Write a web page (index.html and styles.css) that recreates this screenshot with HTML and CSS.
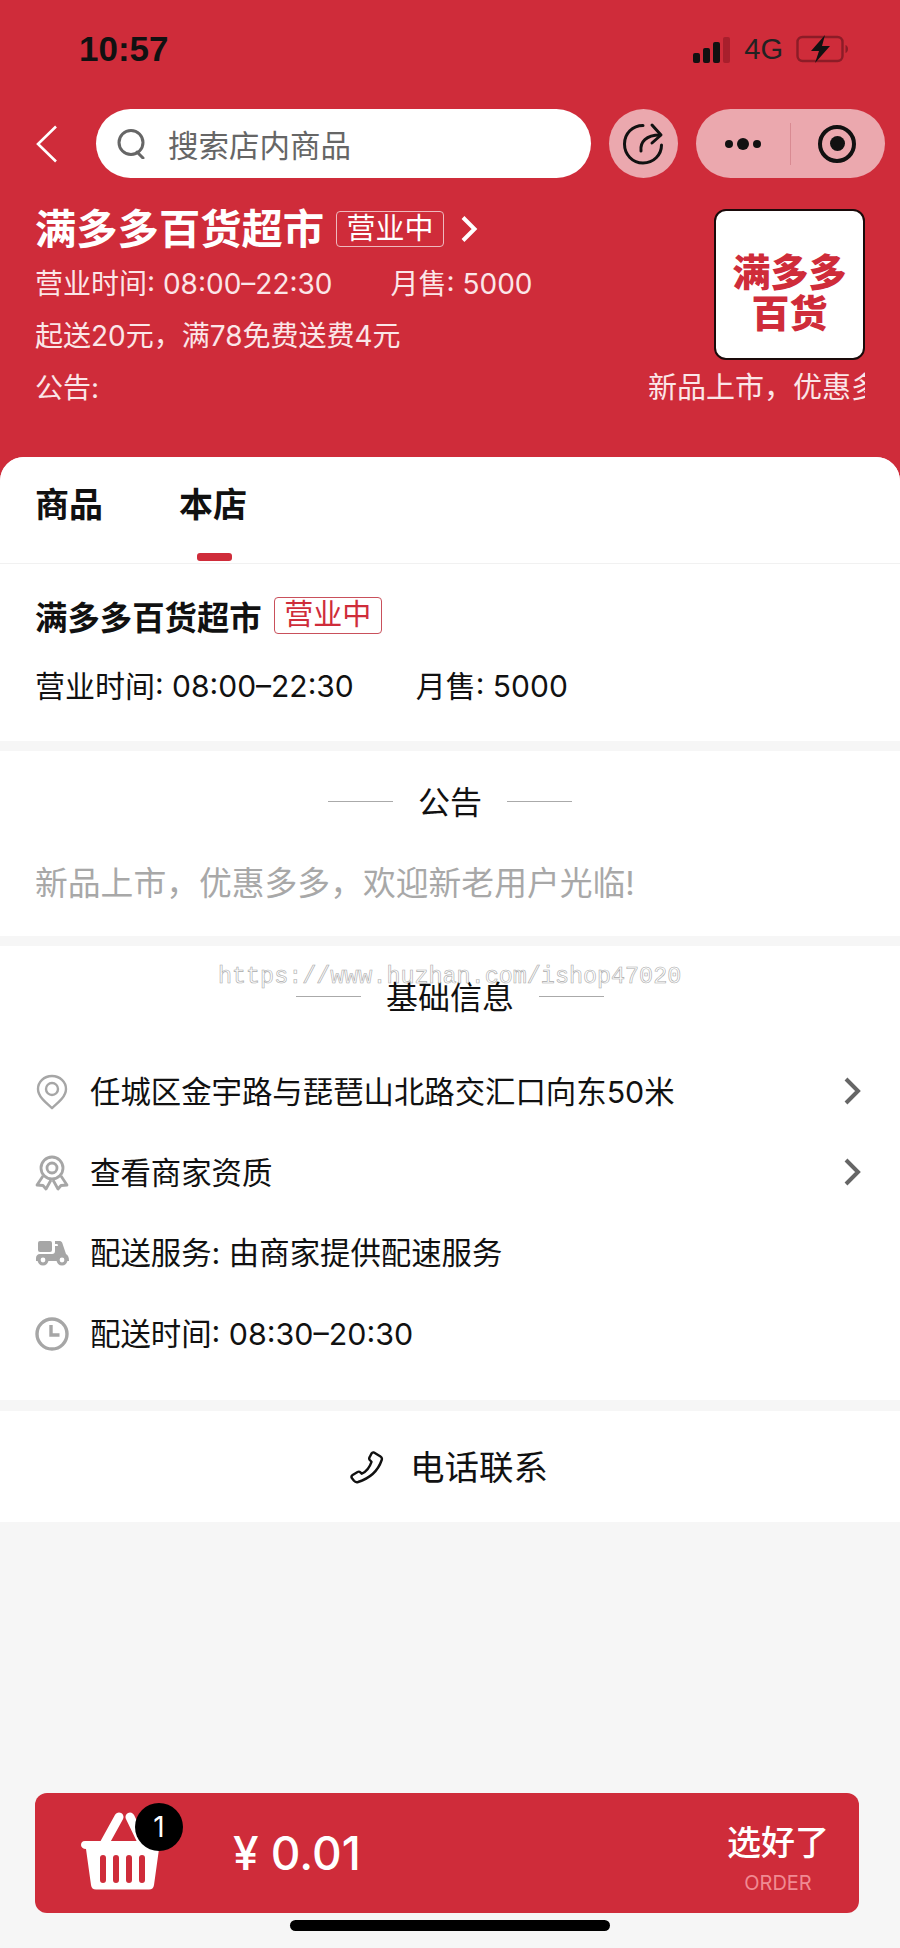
FILE: index.html
```html
<!DOCTYPE html>
<html lang="zh-CN">
<head>
  <meta charset="UTF-8" />
  <meta name="viewport" content="width=device-width, initial-scale=1.0"/>
  <title>满多多百货超市</title>
  <link rel="stylesheet" href="styles.css">
</head>
<body>
  <div class="page">
    <header class="header">
      <div class="status-bar">
        <span class="time">10:57</span>
        <div class="status-right">
          <div class="signal">
            <i class="bar bar-1"></i><i class="bar bar-2"></i><i class="bar bar-3"></i><i class="bar bar-4"></i>
          </div>
          <span class="network">4G</span>
          <svg class="battery" viewBox="0 0 52 28" width="52" height="28">
            <rect x="1.5" y="2" width="45" height="24" rx="5" fill="none" stroke="#8c1c27" stroke-width="2.4"/>
            <path d="M49.500 10v8c1.500-.5 2.500-2 2.500-4s-1-3.500-2.500-4z" fill="#8c1c27"/>
            <path d="M29 0 15 16h8l-4 12 15-17h-8z" fill="#111"/>
          </svg>
        </div>
      </div>

      <div class="nav-bar">
        <svg class="back" viewBox="0 0 22 38" width="22" height="38">
          <path d="M20 1.500 2 19l18 17.500" fill="none" stroke="#fff" stroke-width="2.600"/>
        </svg>
        <div class="search">
          <svg class="search-icon" viewBox="0 0 30 30" width="30" height="30">
            <circle cx="14" cy="13.500" r="12" fill="none" stroke="#666" stroke-width="3"/>
            <path d="M20 23l6 6" stroke="#666" stroke-width="3" stroke-linecap="round"/>
          </svg>
          <span class="search-text">搜索店内商品</span>
        </div>
        <div class="share-btn">
          <svg viewBox="0 0 44 44" width="44" height="44" fill="none" stroke="#111" stroke-width="3" stroke-linecap="round" stroke-linejoin="round">
            <path d="M21 3.500C10.500 3.500 2.500 11.500 2.500 22S10.500 41 21 41s18.500-8 18.500-18"/>
            <path d="M19 29c-1-9 5-16 19-16"/>
            <path d="M30 3l9 10-9 8"/>
          </svg>
        </div>
        <div class="capsule">
          <div class="dots"><i></i><i class="dot-big"></i><i></i></div>
          <i class="capsule-line"></i>
          <div class="target"><i></i></div>
        </div>
      </div>

      <div class="shop">
        <div class="shop-info">
          <div class="shop-title">
            <span class="shop-name">满多多百货超市</span>
            <span class="tag">营业中</span>
            <svg class="title-arrow" viewBox="0 0 18 28" width="18" height="28">
              <path d="M3 2.500 14.500 14 3 25.500" fill="none" stroke="#fff" stroke-width="4"/>
            </svg>
          </div>
          <div class="shop-line"><span class="hours">营业时间: 08:00–22:30</span><span>月售: 5000</span></div>
          <div class="shop-line">起送20元，满78免费送费4元</div>
        </div>
        <div class="logo">满多多<br>百货</div>
      </div>
      <div class="notice-line">
        <span>公告:</span>
        <div class="notice-scroll">新品上市，优惠多多，欢迎新老用户光临!</div>
      </div>
    </header>

    <main class="sheet">
      <div class="tabs">
        <div class="tab"><span>商品</span><i class="tab-bar"></i></div>
        <div class="tab active"><span>本店</span><i class="tab-bar"></i></div>
      </div>

      <section class="section store">
        <div class="store-title">
          <span class="store-name">满多多百货超市</span>
          <span class="tag tag-red">营业中</span>
        </div>
        <div class="store-line"><span class="store-hours">营业时间: 08:00–22:30</span><span>月售: 5000</span></div>
      </section>

      <section class="section announce">
        <div class="heading"><i></i><span>公告</span><i></i></div>
        <p class="announce-text">新品上市，优惠多多，欢迎新老用户光临!</p>
      </section>

      <section class="section info">
        <div class="heading"><i></i><span>基础信息</span><i></i></div>
        <div class="watermark">https://www.huzhan.com/ishop47020</div>
        <div class="info-list">
          <div class="info-row">
            <svg class="info-icon" viewBox="0 0 34 36" width="34" height="36" fill="none" stroke="#a6a6a6" stroke-width="2.400">
              <path d="M17 2C9 2 3 8 3 15c0 7.500 7.500 13.500 14 19 6.500-5.500 14-11.500 14-19C31 8 25 2 17 2z"/>
              <circle cx="17" cy="15" r="6"/>
            </svg>
            <span class="info-text">任城区金宇路与琵琶山北路交汇口向东50米</span>
            <svg class="info-arrow" viewBox="0 0 18 30" width="18" height="30"><path d="M3 3l12 12L3 27" fill="none" stroke="#666" stroke-width="4"/></svg>
          </div>
          <div class="info-row">
            <svg class="info-icon" viewBox="0 0 34 36" width="34" height="36" fill="none" stroke="#a6a6a6" stroke-width="2.800" stroke-linejoin="round">
              <circle cx="17" cy="13" r="11"/>
              <circle cx="17" cy="13" r="5"/>
              <path d="M8 21 2 30l6 .5 3 3.500 5-9"/>
              <path d="M26 21l6 9-6 .5-3 3.500-5-9"/>
            </svg>
            <span class="info-text">查看商家资质</span>
            <svg class="info-arrow" viewBox="0 0 18 30" width="18" height="30"><path d="M3 3l12 12L3 27" fill="none" stroke="#666" stroke-width="4"/></svg>
          </div>
          <div class="info-row">
            <svg class="info-icon" viewBox="0 0 34 26" width="34" height="26">
              <rect x="3" y="1" width="14" height="11" rx="2" fill="#a6a6a6"/>
              <path d="M20 1h5c1 0 2 1 2.300 2l3.700 11c2 1 3 3 3 7H1v-3c0-2 1.500-4 4-4h12c2 0 3-1 3-3V6h3l-.5-2H20z" fill="#a6a6a6"/>
              <circle cx="8" cy="20" r="5.500" fill="#a6a6a6"/>
              <circle cx="8" cy="20" r="2.400" fill="#fff"/>
              <circle cx="27" cy="20" r="5.500" fill="#a6a6a6"/>
              <circle cx="27" cy="20" r="2.400" fill="#fff"/>
            </svg>
            <span class="info-text">配送服务: 由商家提供配速服务</span>
          </div>
          <div class="info-row">
            <svg class="info-icon" viewBox="0 0 34 34" width="34" height="34" fill="none" stroke="#a6a6a6" stroke-width="3.400">
              <circle cx="17" cy="17" r="15"/>
              <path d="M16 8v10h8.500"/>
            </svg>
            <span class="info-text">配送时间: 08:30–20:30</span>
          </div>
        </div>
      </section>

      <section class="section phone">
        <svg viewBox="0 0 34 34" width="34" height="34" fill="none" stroke="#111" stroke-width="2.400" stroke-linejoin="round">
          <path d="M24 2.500l6.500 4c1.300.8 1.700 2 1.200 3.500C28 21 19 28.500 8 32c-1.800.5-3 0-4-1.200L1.800 28c-.6-1.200-.3-2.300.8-3l5-3c1-.6 2-.4 2.800.4l1.300 1.400c4-2 8-6.500 9.800-12l-1.700-1.800c-.7-.9-.8-1.800-.2-2.800l2-3.800c.6-1 1.300-1.200 2.200-.9z"/>
        </svg>
        <span>电话联系</span>
      </section>

      <div class="cart">
        <div class="basket">
          <svg viewBox="0 0 84 78" width="84" height="78">
            <path d="M23 34 39 5M50 5l14 29" stroke="#fff" stroke-width="9" stroke-linecap="round" fill="none"/>
            <path d="M5 29h74c3 0 5 2 5 4s-2 4-5 4l-5 36c-.5 3-2 4.500-5 4.500H16c-3 0-4.500-1.500-5-4.500L6 37c-3 0-5-2-5-4s1-4 4-4z" fill="#fff"/>
            <path d="M23 46v22M36 46v22M49 46v22M62 46v22" stroke="#cf2c3a" stroke-width="6" stroke-linecap="round"/>
          </svg>
          <span class="count">1</span>
        </div>
        <div class="price">¥ 0.01</div>
        <div class="order">
          <span class="order-cn">选好了</span>
          <span class="order-en">ORDER</span>
        </div>
      </div>
      <div class="home-bar"></div>
    </main>
  </div>
</body>
</html>
```

FILE: styles.css
```css
* {
  box-sizing: border-box;
}

body {
  margin: 0;
  font-family: Inter, "Noto Sans CJK SC", sans-serif;
  color: #111;
  overflow: hidden;
}

i {
  display: block;
}

.page {
  width: 900px;
  height: 1948px;
  display: flex;
  flex-direction: column;
  background: #cf2c3a;
}

/* header */
.header {
  height: 457px;
  flex-shrink: 0;
  color: #fff;
}

.status-bar {
  height: 98px;
  display: flex;
  align-items: center;
  justify-content: space-between;
  padding: 0 52px 0 79px;
  font-family: "Liberation Sans", sans-serif;
}

.time {
  font-size: 35px;
  font-weight: 700;
  color: #111;
}

.status-right {
  display: flex;
  align-items: center;
}

.signal {
  display: flex;
  align-items: flex-end;
  gap: 3px;
  height: 26px;
  margin-top: 2px;
}

.bar {
  width: 7px;
  background: #111;
  border-radius: 2px;
}

.bar-1 { height: 10px; }
.bar-2 { height: 15px; }
.bar-3 { height: 21px; }
.bar-4 { height: 26px; background: #a81f2c; }

.network {
  margin: 0 13px 0 14px;
  font-size: 29px;
  color: #222;
}

.battery {
  display: block;
}

.nav-bar {
  margin-top: 11px;
  height: 69px;
  display: flex;
  align-items: center;
  padding-left: 36px;
}

.back {
  flex-shrink: 0;
}

.search {
  width: 495px;
  height: 69px;
  margin-left: 38px;
  padding-left: 21px;
  background: #fff;
  border-radius: 35px;
  display: flex;
  align-items: center;
}

.search-text {
  margin-left: 21px;
  font-size: 30.500px;
  color: #666;
}

.share-btn {
  width: 69px;
  height: 69px;
  margin-left: 18px;
  border-radius: 50%;
  background: #eba8ae;
  display: flex;
  align-items: center;
  justify-content: center;
}

.capsule {
  width: 189px;
  height: 69px;
  margin-left: 18px;
  border-radius: 35px;
  background: #eba8ae;
  display: flex;
  align-items: center;
}

.dots {
  width: 94px;
  display: flex;
  align-items: center;
  justify-content: center;
  gap: 4px;
}

.dots i {
  width: 8px;
  height: 8px;
  border-radius: 50%;
  background: #111;
}

.dots .dot-big {
  width: 12px;
  height: 12px;
}

.capsule-line {
  width: 1px;
  height: 42px;
  background: #d98a92;
}

.target {
  width: 38px;
  height: 38px;
  margin-left: 27px;
  border: 4px solid #111;
  border-radius: 50%;
  display: flex;
  align-items: center;
  justify-content: center;
}

.target i {
  width: 15px;
  height: 15px;
  border-radius: 50%;
  background: #111;
}

.shop {
  margin-top: 31px;
  padding: 0 35px;
  display: flex;
  justify-content: space-between;
}

.shop-title {
  height: 40px;
  margin-bottom: 9px;
  display: flex;
  align-items: center;
}

.shop-name {
  font-size: 41.300px;
  font-weight: 700;
  line-height: 40px;
}

.tag {
  width: 108px;
  height: 36px;
  margin-left: 12px;
  border: 1px solid #eeb9be;
  border-radius: 4px;
  font-size: 29px;
  line-height: 33px;
  text-align: center;
}

.title-arrow {
  margin-left: 16px;
}

.shop-line {
  height: 52px;
  line-height: 52px;
  font-size: 28px;
  color: #fbe6e8;
}

.hours {
  margin-right: 58px;
}

.logo {
  width: 151px;
  height: 151px;
  padding-top: 16px;
  background: #fff;
  border: 2px solid #1a0a0a;
  border-radius: 12px;
  display: flex;
  align-items: center;
  justify-content: center;
  text-align: center;
  font-size: 38px;
  font-weight: 900;
  line-height: 41px;
  color: #cf2c3a;
}

.notice-line {
  height: 52px;
  padding: 0 35px;
  display: flex;
  justify-content: space-between;
  line-height: 52px;
  font-size: 28px;
  color: #fbe6e8;
}

.notice-scroll {
  width: 217px;
  overflow: hidden;
  white-space: nowrap;
  font-size: 29px;
}

/* sheet */
.sheet {
  flex: 1;
  display: flex;
  flex-direction: column;
  background: #f6f6f6;
  border-radius: 24px 24px 0 0;
  overflow: hidden;
}

.tabs {
  height: 107px;
  flex-shrink: 0;
  padding: 28px 0 0 35px;
  display: flex;
  gap: 76px;
  background: #fff;
  border-bottom: 1px solid #f1f1f1;
}

.tab {
  display: flex;
  flex-direction: column;
  align-items: center;
  font-size: 34px;
  font-weight: 700;
  line-height: 40px;
}

.tab-bar {
  width: 35px;
  height: 8px;
  margin: 28px 0 0 3px;
  border-radius: 3px;
}

.tab.active .tab-bar {
  background: #cf2c3a;
}

.section {
  background: #fff;
  flex-shrink: 0;
}

.store {
  padding: 31px 35px 35px;
}

.store-title {
  height: 40px;
  display: flex;
  align-items: center;
}

.store-name {
  font-size: 32.400px;
  font-weight: 700;
}

.tag-red {
  height: 37px;
  margin-left: 12px;
  border-color: #c9505b;
  color: #cf2c3a;
  line-height: 34px;
}

.store-line {
  margin-top: 31px;
  line-height: 40px;
  font-size: 30px;
}

.store-hours {
  margin-right: 62px;
}

.heading {
  height: 40px;
  display: flex;
  align-items: center;
  justify-content: center;
  gap: 25px;
  font-size: 32px;
}

.heading span {
  margin-top: -3px;
}

.heading i {
  width: 65px;
  height: 1px;
  background: #aaa;
}

.announce {
  margin-top: 10px;
  padding: 30px 35px 33px;
}

.announce-text {
  margin: 42px 0 0;
  line-height: 40px;
  font-size: 32.800px;
  color: #a8a8a8;
}

.info {
  position: relative;
  margin-top: 10px;
  padding: 30px 35px 26px;
}

.watermark {
  position: absolute;
  top: 15px;
  left: 218px;
  font-family: "Liberation Mono", monospace;
  font-size: 23.400px;
  line-height: 32px;
  color: #fff;
  -webkit-text-stroke: 0.6px #aaa;
  white-space: nowrap;
}

.info-list {
  margin-top: 36px;
}

.info-row {
  height: 80.500px;
  display: flex;
  align-items: center;
  font-size: 30.400px;
}

.info-icon {
  width: 34px;
  flex-shrink: 0;
}

.info-text {
  margin-left: 21px;
  margin-top: -4px;
  flex: 1;
}

.info-arrow {
  margin-right: 4px;
  margin-top: -2px;
}

.phone {
  height: 111px;
  margin-top: 11px;
  padding-right: 2px;
  display: flex;
  align-items: center;
  justify-content: center;
  gap: 26px;
  font-size: 34.500px;
}

.phone span {
  margin-top: -4px;
}

/* cart */
.cart {
  height: 120px;
  margin: auto 41px 0 35px;
  flex-shrink: 0;
  display: flex;
  align-items: center;
  background: #cf2c3a;
  border-radius: 12px;
  color: #fff;
}

.basket {
  position: relative;
  width: 84px;
  height: 78px;
  margin: -4px 0 0 45px;
}

.basket svg {
  display: block;
}

.count {
  position: absolute;
  top: -9px;
  left: 55px;
  width: 48px;
  height: 48px;
  border-radius: 50%;
  background: #000;
  text-align: center;
  font-size: 28px;
  line-height: 48px;
}

.price {
  margin-left: 69px;
  font-size: 46px;
  font-weight: 500;
  flex: 1;
}

.order {
  width: 132px;
  margin: 10px 15px 0 0;
  display: flex;
  flex-direction: column;
  align-items: center;
}

.order-cn {
  font-size: 34px;
  font-weight: 500;
  line-height: 40px;
}

.order-en {
  margin-top: 9px;
  font-size: 20px;
  line-height: 22px;
  color: #f08a92;
}

.home-bar {
  width: 320px;
  height: 11px;
  margin: 7px auto 17px;
  flex-shrink: 0;
  background: #000;
  border-radius: 6px;
}
```
